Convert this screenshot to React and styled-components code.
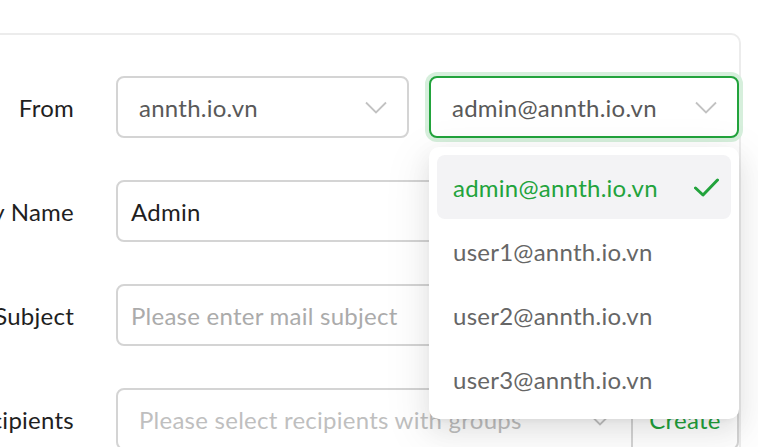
import React from "react";
import styled, { createGlobalStyle, css } from "styled-components";

const GlobalStyle = createGlobalStyle`
  html, body { margin: 0; padding: 0; background: #ffffff; }
  body { font-family: Lato, "Noto Sans", sans-serif; overflow: hidden; }
  * { box-sizing: border-box; }
`;

const GREEN = "#22a33c";

const Page = styled.div`
  width: 758px;
  height: 447px;
  overflow: hidden;
  padding-top: 33px;
`;

const Card = styled.div`
  width: 941px;
  margin-left: -200px;
  border: 2px solid #ececec;
  border-radius: 10px;
  padding: 41px 0 60px 0;
`;

const Form = styled.div`
  display: grid;
  grid-template-columns: 272px 1fr;
  grid-auto-rows: 62px;
  column-gap: 42px;
  row-gap: 42px;
  font-size: 24px;
  letter-spacing: 0.25px;
`;

const Label = styled.div`
  text-align: right;
  color: #1f1f1f;
  height: 62px;
  line-height: 60px;
  padding-top: 2px;
`;

const Pair = styled.div`
  display: grid;
  grid-template-columns: 293px 1fr;
  column-gap: 20px;
`;

const SelectWrap = styled.div`
  position: relative;
`;

const SelectBox = styled.div`
  height: 62px;
  border: 2px solid #d4d4d4;
  border-radius: 8px;
  padding: 1px 20px 0 21px;
  display: flex;
  align-items: center;
  justify-content: space-between;
  color: ${(p) => (p.$placeholder ? "#bfbfbf" : "#595959")};
  background: #fff;
  ${(p) =>
    p.$focused &&
    css`
      border-color: ${GREEN};
      box-shadow: 0 0 0 4px #d6efdc;
    `}
  ${(p) =>
    p.$joined &&
    css`
      border-radius: 8px 0 0 8px;
    `}
`;

const Input = styled.div`
  height: 62px;
  border: 2px solid #d4d4d4;
  border-radius: 8px;
  padding: 1px 13px 0;
  display: flex;
  align-items: center;
  color: ${(p) => (p.$placeholder ? "#ababab" : "#1f1f1f")};
`;

const Compact = styled.div`
  display: grid;
  grid-template-columns: 1fr 106px;
`;

const AddonButton = styled.div`
  height: 62px;
  border: 2px solid #d4d4d4;
  border-left: none;
  border-radius: 0 8px 8px 0;
  padding-top: 1px;
  display: flex;
  align-items: center;
  justify-content: center;
  color: ${GREEN};
`;

const Dropdown = styled.div`
  position: absolute;
  top: calc(100% + 9px);
  left: 0;
  right: 0;
  background: #fff;
  border-radius: 10px;
  padding: 8px;
  box-shadow: 0 9px 24px 0 rgba(0, 0, 0, 0.08), 0 4px 9px -6px rgba(0, 0, 0, 0.12),
    0 13px 42px 12px rgba(0, 0, 0, 0.05);
  z-index: 10;
`;

const Option = styled.div`
  height: 64px;
  padding: 1px 12px 0 16px;
  border-radius: 8px;
  display: flex;
  align-items: center;
  justify-content: space-between;
  color: ${(p) => (p.$selected ? GREEN : "#666666")};
  background: ${(p) => (p.$selected ? "#f3f3f5" : "transparent")};
`;

const Chevron = () => (
  <svg width="22" height="13" viewBox="0 0 22 13" fill="none">
    <polyline points="1,1.5 11,11.5 21,1.5" stroke="#c2c2c2" strokeWidth="1.8" />
  </svg>
);

const Check = () => (
  <svg width="25" height="19" viewBox="0 0 25 19" fill="none">
    <polyline
      points="1.5,10 9,17 23.5,2"
      stroke={GREEN}
      strokeWidth="3"
      strokeLinejoin="round"
      strokeLinecap="round"
    />
  </svg>
);

const options = [
  "admin@annth.io.vn",
  "user1@annth.io.vn",
  "user2@annth.io.vn",
  "user3@annth.io.vn",
];

export default function App() {
  return (
    <>
      <GlobalStyle />
      <Page>
        <Card>
          <Form>
            <Label>From</Label>
            <Pair>
              <SelectBox>
                <span>annth.io.vn</span>
                <Chevron />
              </SelectBox>
              <SelectWrap>
                <SelectBox $focused>
                  <span>admin@annth.io.vn</span>
                  <Chevron />
                </SelectBox>
                <Dropdown>
                  {options.map((o, i) => (
                    <Option key={o} $selected={i === 0}>
                      <span>{o}</span>
                      {i === 0 && <Check />}
                    </Option>
                  ))}
                </Dropdown>
              </SelectWrap>
            </Pair>

            <Label>Display Name</Label>
            <Input>Admin</Input>

            <Label>Subject</Label>
            <Input $placeholder>Please enter mail subject</Input>

            <Label>Recipients</Label>
            <Compact>
              <SelectBox $placeholder $joined>
                <span>Please select recipients with groups</span>
                <Chevron />
              </SelectBox>
              <AddonButton>Create</AddonButton>
            </Compact>
          </Form>
        </Card>
      </Page>
    </>
  );
}
